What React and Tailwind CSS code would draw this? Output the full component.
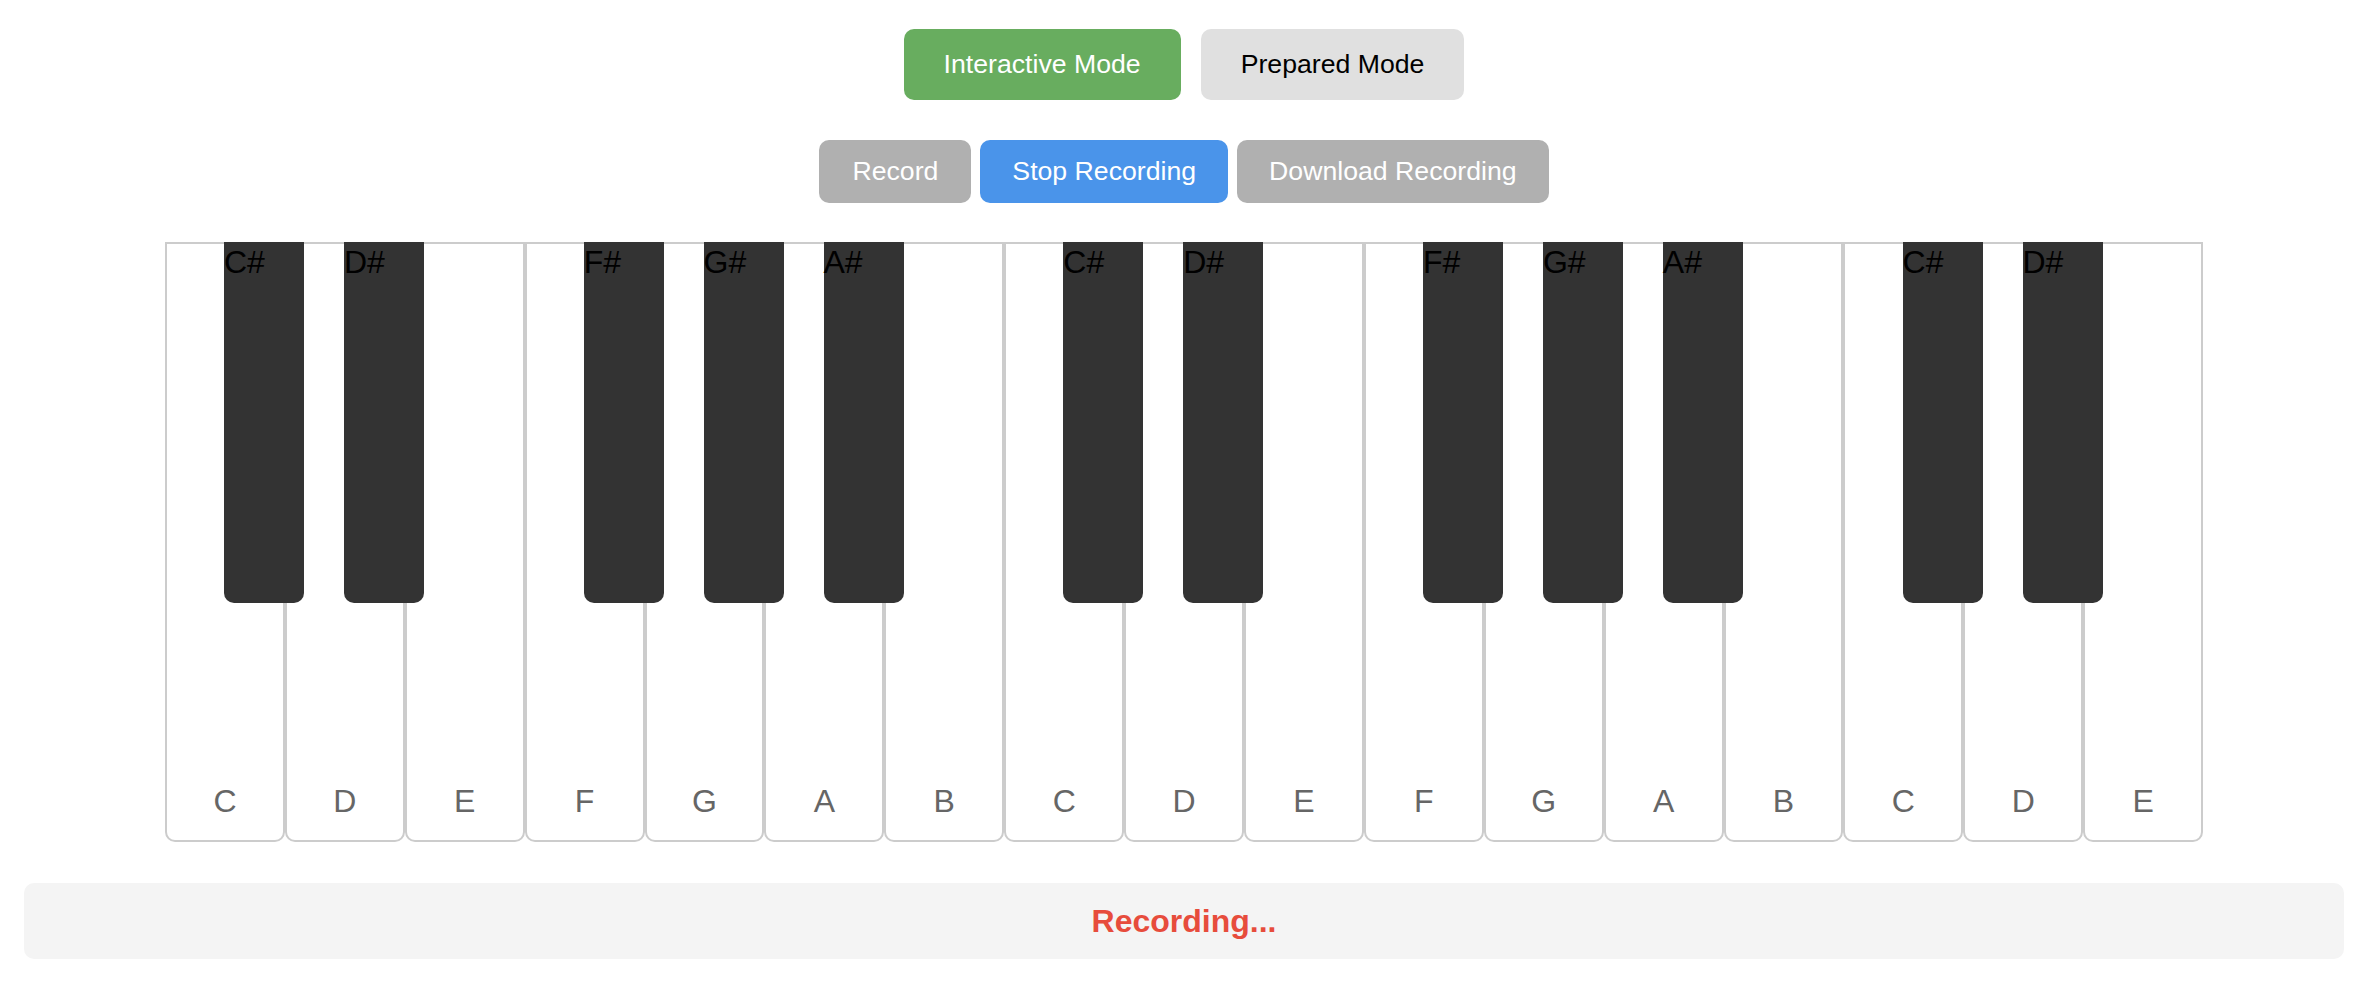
import React from "react";

const WHITE = ["C","D","E","F","G","A","B","C","D","E","F","G","A","B","C","D","E"];
const BLACK = [
  { n: "C#", i: 0 }, { n: "D#", i: 1 },
  { n: "F#", i: 3 }, { n: "G#", i: 4 }, { n: "A#", i: 5 },
  { n: "C#", i: 7 }, { n: "D#", i: 8 },
  { n: "F#", i: 10 }, { n: "G#", i: 11 }, { n: "A#", i: 12 },
  { n: "C#", i: 14 }, { n: "D#", i: 15 },
];

export default function App() {
  return (
    <div className="min-h-[986px] w-[2372px] bg-white font-['Liberation_Sans',Arial,sans-serif]">
      <div className="ml-[24px] w-[2320px] pt-[29px] flex flex-col items-center">
        <div className="flex gap-[20px]">
          <button className="bg-[#68ad5f] text-white text-[26.67px] leading-[31px] px-[40px] py-[20px] rounded-[10px]">
            Interactive Mode
          </button>
          <button className="bg-[#e0e0e0] text-black text-[26.67px] leading-[31px] px-[40px] py-[20px] rounded-[10px]">
            Prepared Mode
          </button>
        </div>
        <div className="flex gap-[9px] mt-[40px]">
          <button className="bg-[#b0b0b0] text-white text-[26.67px] leading-[31px] px-[33px] py-[16px] rounded-[10px]">
            Record
          </button>
          <button className="bg-[#4a94ea] text-white text-[26.67px] leading-[31px] px-[32px] py-[16px] rounded-[10px]">
            Stop Recording
          </button>
          <button className="bg-[#b0b0b0] text-white text-[26.67px] leading-[31px] px-[32px] py-[16px] rounded-[10px]">
            Download Recording
          </button>
        </div>
        <div className="relative mt-[39px] flex h-[600px] w-[2038px]">
          {WHITE.map((n, k) => (
            <div
              key={k}
              className="flex h-full w-[119.9px] shrink-0 items-end justify-center rounded-b-[10px] border-2 border-[#ccc] bg-white pb-[20px] text-[32px] leading-[37px] text-[#666]"
            >
              {n}
            </div>
          ))}
          {BLACK.map((b, k) => (
            <div
              key={k}
              className="absolute top-0 h-[361px] w-[80px] rounded-b-[10px] bg-[#333] pt-[2px] text-[32px] leading-[37px] text-black"
              style={{ left: b.i * 119.9 + 59 }}
            >
              {b.n}
            </div>
          ))}
        </div>
        <div className="mt-[41px] flex h-[76px] w-full items-center justify-center rounded-[10px] bg-[#f4f4f4] text-[32px] font-bold text-[#e74c3c]">
          Recording...
        </div>
      </div>
    </div>
  );
}
